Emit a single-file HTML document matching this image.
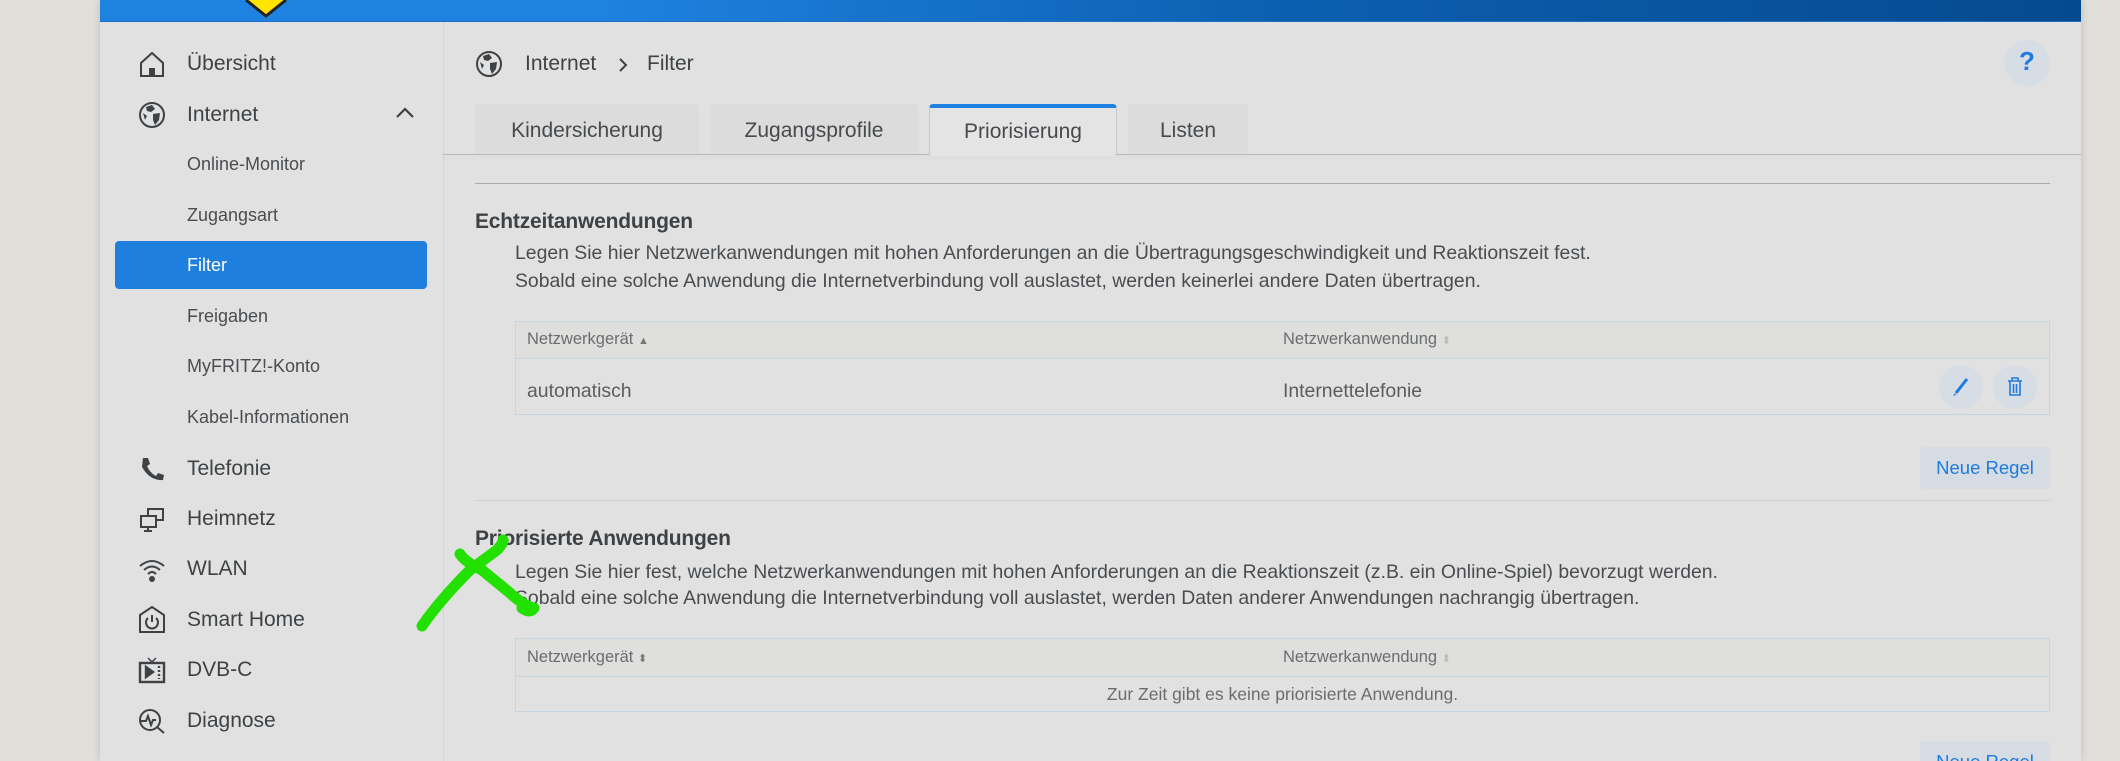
<!DOCTYPE html>
<html style="background:#e1dfda;width:2120px;height:761px;overflow:hidden"><head><meta charset="utf-8"><style>
*{margin:0;padding:0;box-sizing:border-box}
body{width:2120px;height:761px;overflow:hidden;background:#e1dfda;font-family:"Liberation Sans",sans-serif;color:#454545;position:relative}
.a{position:absolute;white-space:nowrap}
#panel{position:absolute;left:100px;top:0;width:1981px;height:761px;background:#e1e1e1;box-shadow:0 0 8px rgba(0,0,0,.15)}
#hdr{position:absolute;left:100px;top:0;width:1981px;height:22px;background:linear-gradient(90deg,#1e82e0 0%,#1e82e0 25%,#0c5fb0 60%,#054a8f 100%);border-bottom:1px solid #1c6fc2}
#side{position:absolute;left:443px;top:22px;width:1px;height:739px;background:#d4d4d4}
.nav{font-size:21px;color:#3e4245}
.sub{font-size:18px;color:#4a4d50}
.ic{position:absolute;left:138px;width:28px;height:28px}
.tab{position:absolute;top:104px;height:50px;background:#dcdcdc;border-radius:4px 4px 0 0;font-size:21px;color:#474a4d;text-align:center;line-height:54px}
.desc{font-size:19.4px;color:#4a4d50}
.h2{font-size:21px;color:#3e4245;font-weight:bold;letter-spacing:-0.2px}
.tbl{position:absolute;left:515px;width:1535px;border:1px solid #c6d5e0}
.th{font-size:16.5px;color:#6a6d70}
.btn{position:absolute;background:#d5dce4;border-radius:4px;color:#1e7be0;font-size:18.5px;text-align:center}
.circ{position:absolute;width:44px;height:44px;border-radius:50%;background:#d7dde4}
</style></head><body>
<div id="panel"></div>
<div id="hdr"></div>
<svg class="a" style="left:240px;top:0" width="60" height="20"><path d="M6 0 L26 16 L46 0" fill="#ffe400" stroke="#222" stroke-width="3"/></svg>
<div id="side"></div>
<div class="a" style="left:115px;top:241px;width:312px;height:48px;background:#1e7fdf;border-radius:4px"></div>

<svg class="ic" style="top:50px" viewBox="0 0 28 28" fill="none" stroke="#3e4245" stroke-width="2"><path d="M3 13 L14 3 L25 13 V26 H3 Z"/><rect x="12" y="19" width="4" height="7" fill="#3e4245"/></svg>
<svg class="ic" style="top:101px" viewBox="0 0 28 28"><circle cx="14" cy="14" r="12" fill="none" stroke="#3e4245" stroke-width="2"/><path d="M8 6 L14 4 L17 8 L13 11 L9 10Z M15 13 L22 12 L21 19 L17 24 L15 19Z M5 12 L9 15 L7 19Z" fill="#3e4245"/></svg>
<svg class="a" style="left:394px;top:106px" width="22" height="14"><path d="M3 11 L11 3 L19 11" fill="none" stroke="#3e4245" stroke-width="2.2"/></svg>
<svg class="ic" style="top:455px" viewBox="0 0 28 28"><path d="M5 3 L10 3 L12 9 L9 11 Q12 18 18 21 L20 18 L26 20 L25 25 Q12 26 4 12 Z" fill="#3e4245"/></svg>
<svg class="ic" style="top:506px" viewBox="0 0 28 28" fill="none" stroke="#3e4245" stroke-width="2"><rect x="10" y="3" width="15" height="11"/><rect x="3" y="10" width="15" height="11" fill="#e1e1e1"/><path d="M10 21 V25 M6 25 H14"/></svg>
<svg class="ic" style="top:556px" viewBox="0 0 28 28" fill="none" stroke="#3e4245" stroke-width="2"><path d="M2 10 Q14 0 26 10 M6 14 Q14 7 22 14 M10 18 Q14 14 18 18"/><circle cx="14" cy="23" r="2" fill="#3e4245"/></svg>
<svg class="ic" style="top:605px" viewBox="0 0 28 28" fill="none" stroke="#3e4245" stroke-width="2"><path d="M2 10 L14 2 L26 10 V27 H2 Z"/><path d="M10 13 A6 6 0 1 0 18 13 M14 10 V17"/></svg>
<svg class="ic" style="top:656px" viewBox="0 0 28 28" fill="none" stroke="#3e4245" stroke-width="2.4"><rect x="2" y="7" width="24" height="19"/><path d="M10 2 L14 6 L18 2" stroke-width="1.5"/><path d="M8 11 L15 16 L8 21Z" fill="#3e4245"/><path d="M21 10V23" stroke-dasharray="2 2"/></svg>
<svg class="ic" style="top:707px" viewBox="0 0 28 28" fill="none" stroke="#3e4245" stroke-width="2"><circle cx="12" cy="13" r="10"/><path d="M2 14 H8 L10 9 L13 18 L15 13 H18 M19 20 L26 26"/></svg>

<div class="a nav" style="left:187px;top:52px">Übersicht</div>
<div class="a nav" style="left:187px;top:103px">Internet</div>
<div class="a sub" style="left:187px;top:154px">Online-Monitor</div>
<div class="a sub" style="left:187px;top:205px">Zugangsart</div>
<div class="a sub" style="left:187px;top:255px;color:#fff">Filter</div>
<div class="a sub" style="left:187px;top:306px">Freigaben</div>
<div class="a sub" style="left:187px;top:356px">MyFRITZ!-Konto</div>
<div class="a sub" style="left:187px;top:407px">Kabel-Informationen</div>
<div class="a nav" style="left:187px;top:457px">Telefonie</div>
<div class="a nav" style="left:187px;top:507px">Heimnetz</div>
<div class="a nav" style="left:187px;top:557px">WLAN</div>
<div class="a nav" style="left:187px;top:608px">Smart Home</div>
<div class="a nav" style="left:187px;top:658px">DVB-C</div>
<div class="a nav" style="left:187px;top:709px">Diagnose</div>

<svg class="a" style="left:475px;top:50px" width="28" height="28" viewBox="0 0 28 28"><circle cx="14" cy="14" r="12" fill="none" stroke="#3e4245" stroke-width="2"/><path d="M8 6 L14 4 L17 8 L13 11 L9 10Z M15 13 L22 12 L21 19 L17 24 L15 19Z M5 12 L9 15 L7 19Z" fill="#3e4245"/></svg>
<div class="a nav" style="left:525px;top:52px">Internet</div>
<svg class="a" style="left:617px;top:56px" width="12" height="18"><path d="M3 3 L9 9 L3 15" fill="none" stroke="#3e4245" stroke-width="2"/></svg>
<div class="a nav" style="left:647px;top:52px">Filter</div>
<div class="circ" style="left:2004px;top:40px;width:46px;height:46px"></div>
<div class="a" style="left:2004px;top:46px;width:46px;text-align:center;font-size:26px;font-weight:bold;color:#1e7be0">?</div>

<div class="tab" style="left:475px;width:224px">Kindersicherung</div>
<div class="tab" style="left:710px;width:208px">Zugangsprofile</div>
<div class="tab" style="left:929px;width:188px;background:#e4e4e4;border-top:4px solid #1e82e0;line-height:48px;height:52px;border-left:1px solid #c8c8c8;border-right:1px solid #c8c8c8;z-index:2">Priorisierung</div>
<div class="tab" style="left:1128px;width:120px">Listen</div>
<div class="a" style="left:443px;top:154px;width:1638px;height:1px;background:#b9b9b9;box-shadow:0 2px 4px rgba(0,0,0,.06)"></div>
<div class="a" style="left:475px;top:183px;width:1575px;height:1px;background:#aaa"></div>

<div class="a h2" style="left:475px;top:210px">Echtzeitanwendungen</div>
<div class="a desc" style="left:515px;top:242px">Legen Sie hier Netzwerkanwendungen mit hohen Anforderungen an die Übertragungsgeschwindigkeit und Reaktionszeit fest.</div>
<div class="a desc" style="left:515px;top:270px">Sobald eine solche Anwendung die Internetverbindung voll auslastet, werden keinerlei andere Daten übertragen.</div>

<div class="tbl" style="top:321px;height:94px"><div style="height:37px;background:#dfdfdd;border-bottom:1px solid #c6d5e0"></div></div>
<div class="a th" style="left:527px;top:330px">Netzwerkgerät <span style="font-size:11px;color:#777">▲</span></div>
<div class="a th" style="left:1283px;top:330px">Netzwerkanwendung <span style="font-size:11px;color:#bbb">⬍</span></div>
<div class="a desc" style="left:527px;top:380px;color:#5a5d60">automatisch</div>
<div class="a desc" style="left:1283px;top:380px;color:#5a5d60">Internettelefonie</div>
<div class="circ" style="left:1939px;top:365px"></div>
<div class="circ" style="left:1993px;top:365px"></div>
<svg class="a" style="left:1950px;top:376px" width="22" height="22"><path d="M17 3 L6 17" stroke="#1e7be0" stroke-width="3"/><path d="M5 17 L3 20 L6 19Z" fill="#1e7be0"/></svg>
<svg class="a" style="left:2004px;top:375px" width="22" height="24" fill="none" stroke="#1e7be0" stroke-width="1.6"><path d="M4 6 H18 M8 6 V3 H14 V6 M6 6 V20 H16 V6 M9.5 9 V18 M12.5 9 V18"/></svg>
<div class="btn" style="left:1920px;top:447px;width:130px;height:42px;line-height:42px">Neue Regel</div>
<div class="a" style="left:475px;top:500px;width:1575px;height:1px;background:#d0d0d0"></div>

<div class="a h2" style="left:475px;top:527px">Priorisierte Anwendungen</div>
<div class="a desc" style="left:515px;top:561px">Legen Sie hier fest, welche Netzwerkanwendungen mit hohen Anforderungen an die Reaktionszeit (z.B. ein Online-Spiel) bevorzugt werden.</div>
<div class="a desc" style="left:515px;top:587px">Sobald eine solche Anwendung die Internetverbindung voll auslastet, werden Daten anderer Anwendungen nachrangig übertragen.</div>
<div class="tbl" style="top:638px;height:74px"><div style="height:38px;background:#dfdfdd;border-bottom:1px solid #c6d5e0"></div></div>
<div class="a th" style="left:527px;top:648px">Netzwerkgerät <span style="font-size:11px;color:#777">⬍</span></div>
<div class="a th" style="left:1283px;top:648px">Netzwerkanwendung <span style="font-size:11px;color:#bbb">⬍</span></div>
<div class="a th" style="left:515px;top:684px;width:1535px;text-align:center;font-size:17.5px">Zur Zeit gibt es keine priorisierte Anwendung.</div>
<div class="btn" style="left:1920px;top:741px;width:130px;height:42px;line-height:42px">Neue Regel</div>

<svg class="a" style="left:0;top:0" width="2120" height="761"><g fill="none" stroke="#22e000" stroke-width="11" stroke-linecap="round" stroke-linejoin="round"><path d="M422 626 Q440 600 470 570 L497 550 Q504 542 503 540"/><path d="M460 554 Q465 562 482 570 L510 593 Q524 606 534 608 Q530 614 522 608"/></g></svg>
</body></html>
